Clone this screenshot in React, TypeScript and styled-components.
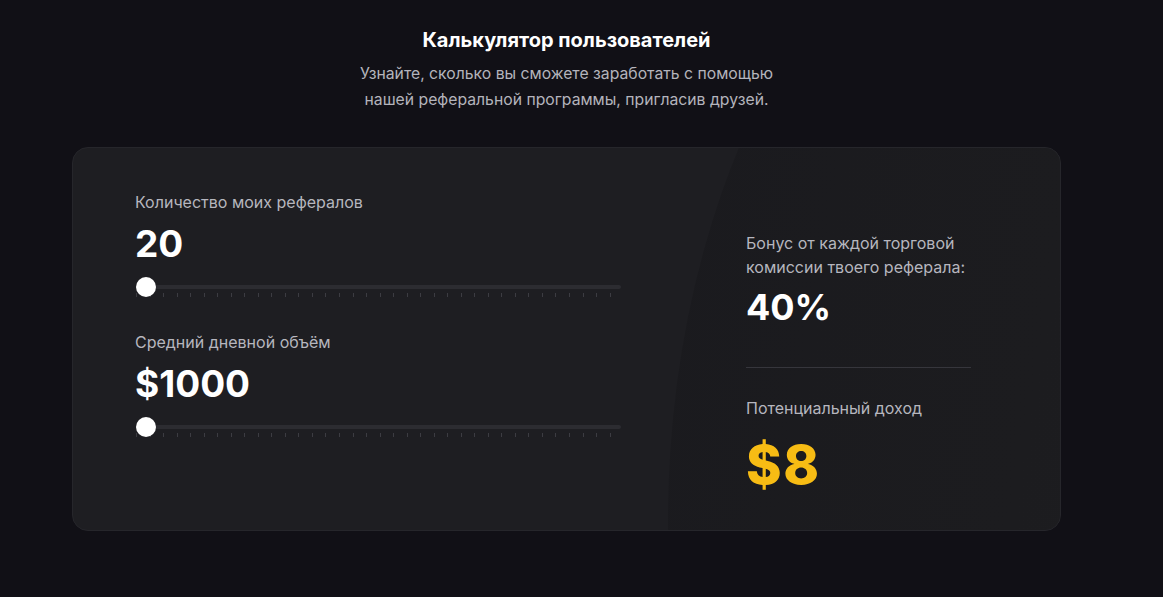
import React from "react";
import styled, { createGlobalStyle } from "styled-components";

const Global = createGlobalStyle`
  html, body { margin: 0; padding: 0; background: #111016; }
  body { font-family: Inter, "Noto Sans", sans-serif; -webkit-font-smoothing: antialiased; }
`;

const Page = styled.div`
  width: 1163px;
  height: 597px;
  box-sizing: border-box;
  padding: 27px 102px 0 72px;
  display: flex;
  flex-direction: column;
  align-items: center;
  background: #111016;
`;

const Title = styled.h2`
  margin: 0;
  font-size: 20px;
  line-height: 26px;
  font-weight: 700;
  color: #ffffff;
`;

const Subtitle = styled.p`
  margin: 8px 0 0;
  font-size: 15.75px;
  line-height: 26px;
  color: #b4b4bc;
  text-align: center;
`;

const Card = styled.div`
  position: relative;
  overflow: hidden;
  margin-top: 34px;
  width: 989px;
  height: 384px;
  box-sizing: border-box;
  border-radius: 16px;
  border: 1px solid #26262b;
  background: #1e1e22;
  display: grid;
  grid-template-columns: 486px 225px;
  column-gap: 125px;
  padding: 0 0 0 62px;

  &::before {
    content: "";
    position: absolute;
    left: 595px;
    top: -327px;
    width: 920px;
    height: 1400px;
    border-radius: 50%;
    background: linear-gradient(100deg, #1a1a1e 0%, #1c1c1f 40%, #202023 100%);
    pointer-events: none;
  }
`;

const Column = styled.div<{ $top: number }>`
  position: relative;
  z-index: 1;
  padding-top: ${(p) => p.$top}px;
  display: flex;
  flex-direction: column;
`;

const Label = styled.div`
  font-size: 16px;
  line-height: 24px;
  color: #b6b6be;
`;

const Value = styled.div<{ $size: number; $color?: string; $weight?: number; $mt?: number; $ls?: number }>`
  font-size: ${(p) => p.$size}px;
  line-height: ${(p) => Math.round(p.$size * 1.2)}px;
  font-weight: ${(p) => p.$weight || 700};
  color: ${(p) => p.$color || "#ffffff"};
  margin-top: ${(p) => p.$mt || 0}px;
  letter-spacing: ${(p) => p.$ls || 0}px;
`;

const Field = styled.div`
  display: flex;
  flex-direction: column;
  gap: 8px;
  & + & {
    margin-top: 32px;
  }
`;

const SliderWrap = styled.div`
  position: relative;
  height: 22px;
  margin-top: 2px;
`;

const Track = styled.div`
  position: absolute;
  left: 1px;
  right: 0;
  top: 9px;
  height: 4px;
  border-radius: 2px;
  background: #2c2c31;
`;

const Thumb = styled.div`
  position: absolute;
  left: 1px;
  top: 1px;
  width: 20px;
  height: 20px;
  border-radius: 50%;
  background: #ffffff;
`;

const Ticks = styled.div`
  position: absolute;
  left: 1px;
  top: 17px;
  width: 475px;
  display: flex;
  justify-content: space-between;
`;

const Tick = styled.span`
  width: 1px;
  height: 4px;
  background: #3c3c42;
`;

const Divider = styled.div`
  height: 1px;
  background: #36363c;
  margin: 38px 0 28px;
`;

const Slider = () => (
  <SliderWrap>
    <Track />
    <Ticks>
      {Array.from({ length: 36 }).map((_, i) => (
        <Tick key={i} />
      ))}
    </Ticks>
    <Thumb />
  </SliderWrap>
);

export default function App() {
  return (
    <>
      <Global />
      <Page>
        <Title>Калькулятор пользователей</Title>
        <Subtitle>
          Узнайте, сколько вы сможете заработать с помощью
          <br />
          нашей реферальной программы, пригласив друзей.
        </Subtitle>
        <Card>
          <Column $top={42}>
            <Field>
              <Label>Количество моих рефералов</Label>
              <Value $size={37}>20</Value>
              <Slider />
            </Field>
            <Field>
              <Label>Средний дневной объём</Label>
              <Value $size={37}>$1000</Value>
              <Slider />
            </Field>
          </Column>
          <Column $top={83}>
            <Label>
              Бонус от каждой торговой
              <br />
              комиссии твоего реферала:
            </Label>
            <Value $size={36} $mt={7}>40%</Value>
            <Divider />
            <Label>Потенциальный доход</Label>
            <Value $size={54} $weight={800} $ls={1.5} $color="#f7bc14" $mt={12}>$8</Value>
          </Column>
        </Card>
      </Page>
    </>
  );
}
